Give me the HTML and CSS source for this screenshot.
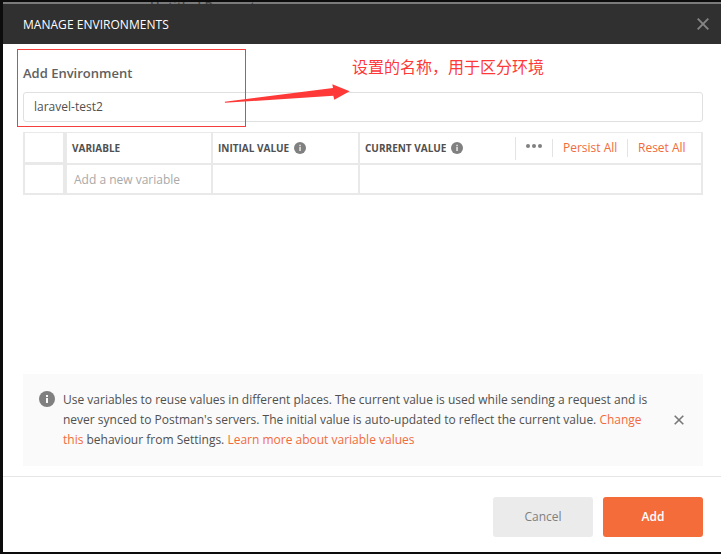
FILE: index.html
```html
<!DOCTYPE html>
<html lang="en">
<head>
<meta charset="utf-8">
<title>Manage Environments</title>
<link rel="stylesheet" href="styles.css">
</head>
<body>
<div class="backdrop"><span class="tab-title">Untitled Request</span></div>
<div class="modal">
  <header class="modal-header">
    <h1 class="modal-title">MANAGE ENVIRONMENTS</h1>
    <svg class="close" width="12" height="12" viewBox="0 0 12 12"><path d="M.7.7l10.6 10.6M11.3.7L.7 11.3" fill="none" stroke="#858585" stroke-width="1.9"/></svg>
  </header>
  <main class="modal-body">
    <h2 class="label">Add Environment</h2>
    <div class="name-input">laravel-test2</div>
    <div class="table">
      <div class="row head">
        <div class="cell check"></div>
        <div class="cell var">VARIABLE</div>
        <div class="cell initial"><span>INITIAL VALUE</span><svg class="info-sm" width="12" height="12" viewBox="0 0 12 12"><circle cx="6" cy="6" r="6" fill="#808080"/><path d="M5.2 2.8h1.7v1.4H5.2zM5.2 5h1.7v4H5.2z" fill="#ddd"/></svg></div>
        <div class="cell current"><span>CURRENT VALUE</span><svg class="info-sm" width="12" height="12" viewBox="0 0 12 12"><circle cx="6" cy="6" r="6" fill="#808080"/><path d="M5.2 2.8h1.7v1.4H5.2zM5.2 5h1.7v4H5.2z" fill="#ddd"/></svg>
          <div class="actions">
            <div class="more"><svg width="16" height="4" viewBox="0 0 16 4"><g fill="#808080"><circle cx="2" cy="2" r="2"/><circle cx="8" cy="2" r="2"/><circle cx="14" cy="2" r="2"/></g></svg></div>
            <div class="action persist">Persist All</div>
            <div class="action reset">Reset All</div>
          </div>
        </div>
      </div>
      <div class="row">
        <div class="cell check"></div>
        <div class="cell var new">Add a new variable</div>
        <div class="cell initial"></div>
        <div class="cell current"></div>
      </div>
    </div>
    <aside class="notice">
      <svg class="info" width="16" height="16" viewBox="0 0 16 16"><circle cx="8" cy="8" r="8" fill="#808080"/><path d="M7 4h2v2H7zM7 7h2v5H7z" fill="#fafafa"/></svg>
      <p class="notice-text">Use variables to reuse values in different places. The current value is used while sending a request and is<br>never synced to Postman's servers. The initial value is auto-updated to reflect the current value. <a>Change</a><br><a>this</a> behaviour from Settings. <a>Learn more about variable values</a></p>
      <svg class="dismiss" width="10" height="10" viewBox="0 0 10 10"><path d="M.7.7l8.6 8.6M9.3.7L.7 9.3" fill="none" stroke="#777" stroke-width="1.6"/></svg>
    </aside>
  </main>
  <footer class="modal-footer">
    <button class="btn cancel">Cancel</button>
    <button class="btn add">Add</button>
  </footer>
</div>
<div class="highlight"></div>
<svg class="arrow" width="128" height="20" viewBox="0 0 128 20"><path d="M.8 17.8L109 4 108.3.2 125.7 7.3 110.3 15.8 109.3 11.7 1 18.8z" fill="#ff3838"/></svg>
<div class="annotation">设置的名称，用于区分环境</div>
</body>
</html>
```
FILE: styles.css
```css
* { box-sizing: border-box; }
body {
  margin: 0;
  width: 721px;
  height: 554px;
  overflow: hidden;
  position: relative;
  padding: 2px 0 2px 3px;
  background: #0c0c0c;
  font-family: "Open Sans", "Noto Sans", sans-serif;
  font-size: 12px;
  color: #505050;
}
.backdrop {
  height: 2px;
  overflow: hidden;
  background: #7b7b7b;
  padding-left: 147px;
}
.tab-title {
  display: block;
  margin-top: -2px;
  font-size: 13px;
  line-height: 13px;
  font-weight: 600;
  color: #444;
}
.modal { height: 548px; background: #fff; display: flex; flex-direction: column; }
.modal-header {
  height: 40px;
  flex: none;
  background: #303030;
  display: flex;
  align-items: center;
  justify-content: space-between;
  padding: 0 12px 0 20px;
  color: #fff;
}
.modal-title { margin: 0; font-size: 12px; font-weight: 500; letter-spacing: .03px; }
.modal-body { flex: 1; display: flex; flex-direction: column; padding: 20px 18px 10px 20px; }
.label { margin: 0; font-size: 13px; line-height: 18px; font-weight: 600; color: #606060; }
.name-input {
  height: 30px;
  margin-top: 10px;
  border: 1px solid #e0e0e0;
  border-radius: 3px;
  padding: 0 10px;
  line-height: 28px;
}
.table { margin-top: 10px; border: solid #e9e9e9; border-width: 1px 2px 0; }
.row { display: flex; height: 30px; border-bottom: 2px solid #e9e9e9; }
.row.head { height: 32px; font-size: 10px; font-weight: 700; }
.cell { display: flex; align-items: center; border-right: 2px solid #e9e9e9; white-space: nowrap; }
.check { width: 42px; border-right-width: 4px; }
.head .check { border-bottom: 1px solid #e9e9e9; }
.var { width: 146px; padding-left: 5px; }
.new { padding-left: 7px; color: #a9a9a9; }
.initial { width: 147px; padding-left: 5px; }
.current { flex: 1; border-right: 0; padding-left: 5px; }
.info-sm { margin-left: 5px; }
.actions { margin-left: auto; display: flex; align-items: center; font-size: 12px; font-weight: 400; color: #f26b3a; }
.more { width: 37px; height: 23px; border-left: 1px solid #e3e3e3; padding: 7px 0 0 10px; }
.more svg { display: block; }
.action { height: 18px; line-height: 17px; border-left: 1px solid #e3e3e3; padding-left: 10px; }
.persist { width: 75px; }
.reset { width: 74px; }
.notice { height: 92px; margin-top: auto; background: #fafafa; display: flex; align-items: flex-start; padding: 16px 19px 0 16px; }
.info { margin-top: 1px; flex: none; }
.notice-text { margin: 0 0 0 8px; line-height: 20px; flex: 1; white-space: nowrap; }
.notice a { color: #f26b3a; }
.dismiss { margin-top: 25px; flex: none; }
.modal-footer { height: 76px; flex: none; border-top: 1px solid #e6e6e6; display: flex; justify-content: flex-end; gap: 10px; padding: 20px 18px 0; }
.btn { width: 100px; height: 40px; border: 0; border-radius: 3px; font: inherit; padding: 0 0 1px; }
.cancel { background: #ebebeb; color: #808080; }
.add { background: #f36c3a; color: #fff; font-weight: 600; }
.highlight { position: absolute; left: 17px; top: 49px; width: 229px; height: 78px; border: 1px solid #f73c3c; }
.arrow { position: absolute; left: 224px; top: 84px; }
.annotation { position: absolute; left: 352px; top: 55px; font: 16px/23px "Noto Sans CJK SC", sans-serif; color: #ff3838; white-space: nowrap; }
```
